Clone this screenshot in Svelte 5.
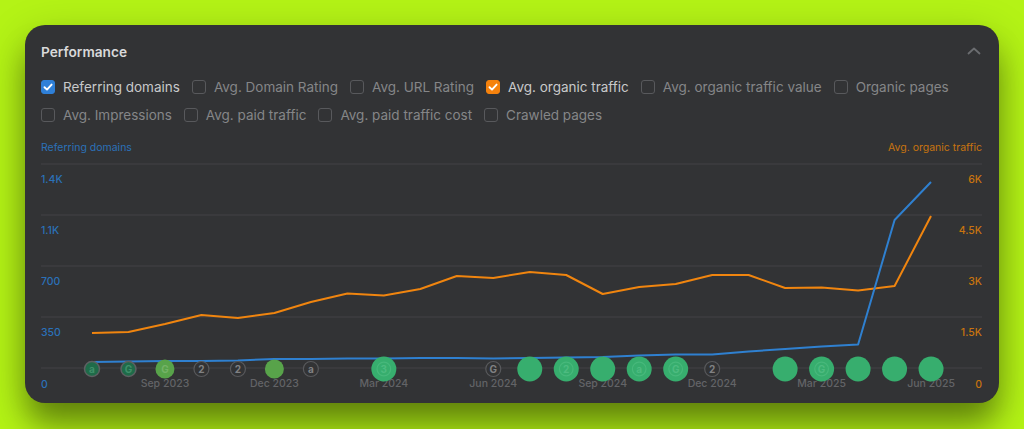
<script>
  const metrics = [
    { label: 'Referring domains', on: 'blue' },
    { label: 'Avg. Domain Rating' },
    { label: 'Avg. URL Rating' },
    { label: 'Avg. organic traffic', on: 'orange' },
    { label: 'Avg. organic traffic value' },
    { label: 'Organic pages' },
    { label: 'Avg. Impressions' },
    { label: 'Avg. paid traffic' },
    { label: 'Avg. paid traffic cost' },
    { label: 'Crawled pages' }
  ];

  const gridLines = [164, 215, 266, 317, 368];
  const leftTicks = [['1.4K', 183], ['1.1K', 234], ['700', 285], ['350', 336], ['0', 388]];
  const rightTicks = [['6K', 183], ['4.5K', 234], ['3K', 285], ['1.5K', 336], ['0', 388]];
  const months = ['Sep 2023', 'Dec 2023', 'Mar 2024', 'Jun 2024', 'Sep 2024', 'Dec 2024', 'Mar 2025', 'Jun 2025'];

  const step = 36.48;
  const xAt = (i) => 92 + i * step;

  const organic = [333, 332, 324, 315, 318, 313, 302, 293.5, 295.5, 289, 276, 278, 272, 275, 294, 287, 284, 275, 275, 288, 287.5, 290.5, 286, 216];
  const referring = [362, 361.5, 361, 361, 360.5, 359, 359, 358.5, 358.5, 358, 358, 358.5, 358, 357.5, 357, 355.5, 354.5, 354.5, 351.5, 349, 346.5, 344.5, 220, 182];

  const toPoints = (ys) => ys.map((y, i) => `${xAt(i).toFixed(1)},${y}`).join(' ');

  // kind: ring = outlined icon, dim = small dark green, mid = olive green, big = full green
  const markers = [
    { i: 0, kind: 'dim', glyph: 'a' },
    { i: 1, kind: 'dim', glyph: 'G' },
    { i: 2, kind: 'mid', glyph: 'G' },
    { i: 3, kind: 'ring', glyph: '2' },
    { i: 4, kind: 'ring', glyph: '2' },
    { i: 5, kind: 'mid', glyph: '' },
    { i: 6, kind: 'ring', glyph: 'a' },
    { i: 8, kind: 'big', glyph: '3' },
    { i: 11, kind: 'ring', glyph: 'G' },
    { i: 12, kind: 'big', glyph: '' },
    { i: 13, kind: 'big', glyph: '2' },
    { i: 14, kind: 'big', glyph: '' },
    { i: 15, kind: 'big', glyph: 'a' },
    { i: 16, kind: 'big', glyph: 'G' },
    { i: 17, kind: 'ring', glyph: '2' },
    { i: 19, kind: 'big', glyph: '' },
    { i: 20, kind: 'big', glyph: 'G' },
    { i: 21, kind: 'big', glyph: '' },
    { i: 22, kind: 'big', glyph: '' },
    { i: 23, kind: 'big', glyph: '' }
  ];
  const radius = { ring: 7.5, dim: 7.5, mid: 9.5, big: 12.5 };
</script>

<div class="page">
  <section class="card">
    <header>
      <h2>Performance</h2>
      <svg class="chevron" width="14" height="14" viewBox="0 0 14 14" fill="none">
        <path d="M1.5 9.5 7 4.5l5.5 5" stroke="#6b6d70" stroke-width="1.8" stroke-linecap="round" stroke-linejoin="round" />
      </svg>
    </header>

    <div class="metrics">
      {#each metrics as m}
        <div class="metric" class:active={m.on}>
          <span class="box {m.on ?? ''}">
            {#if m.on}
              <svg width="10" height="10" viewBox="0 0 10 10" fill="none">
                <path d="M1.5 5.2 4 7.6 8.6 2.6" stroke="#fff" stroke-width="1.9" stroke-linecap="round" stroke-linejoin="round" />
              </svg>
            {/if}
          </span>
          {m.label}
        </div>
      {/each}
    </div>

    <div class="legend">
      <span class="blue-text">Referring domains</span>
      <span class="orange-text">Avg. organic traffic</span>
    </div>

    <svg class="chart" width="941" height="250" viewBox="41 155 941 250">
      {#each gridLines as y}
        <line x1="41" x2="982" y1={y} y2={y} class="grid" />
      {/each}

      {#each leftTicks as [t, y]}
        <text x="41" {y} class="tick left">{t}</text>
      {/each}
      {#each rightTicks as [t, y]}
        <text x="982" {y} class="tick right">{t}</text>
      {/each}
      {#each months as m, n}
        <text x={xAt(2 + n * 3)} y="387" class="month">{m}</text>
      {/each}

      <polyline points={toPoints(organic)} class="line organic" />
      <polyline points={toPoints(referring)} class="line referring" />

      {#each markers as mk}
        <g class="marker {mk.kind}">
          <circle cx={xAt(mk.i)} cy="369" r={radius[mk.kind]} class="fill" />
          {#if mk.glyph}
            <circle cx={xAt(mk.i)} cy="369" r="6.8" class="inner" />
            <text x={xAt(mk.i)} y="372.6">{mk.glyph}</text>
          {/if}
        </g>
      {/each}
    </svg>
  </section>
</div>

<style>
  :global(body) {
    margin: 0;
    background: #b4f316;
  }

  .page {
    width: 1024px;
    height: 429px;
    box-sizing: border-box;
    padding: 25px;
    overflow: hidden;
    background: #b4f316;
    font-family: Inter, "Liberation Sans", sans-serif;
  }

  .card {
    height: 378px;
    box-sizing: border-box;
    padding: 15px 17px 0 16px;
    background: #323335;
    border-radius: 20px;
    box-shadow: 0 24px 30px -3px rgba(0, 0, 0, 0.35), 0 12px 44px rgba(0, 0, 0, 0.22);
  }

  header {
    display: flex;
    justify-content: space-between;
    align-items: center;
    height: 22px;
  }

  h2 {
    margin: 0;
    padding-top: 1px;
    font-size: 13.7px;
    font-weight: 600;
    color: #d9d9da;
  }

  .chevron {
    margin-right: 1px;
  }

  .metrics {
    display: flex;
    flex-wrap: wrap;
    gap: 0 12px;
    margin-top: 11px;
  }

  .metric {
    display: flex;
    align-items: center;
    gap: 8px;
    height: 28px;
    font-size: 13.5px;
    color: #858688;
  }

  .metric.active {
    color: #c8c9ca;
  }

  .box {
    width: 14px;
    height: 14px;
    box-sizing: border-box;
    display: flex;
    align-items: center;
    justify-content: center;
    border: 1px solid #58595c;
    border-radius: 3px;
  }

  .box.blue {
    background: #2f80d8;
    border-color: #2f80d8;
  }

  .box.orange {
    background: #f5820d;
    border-color: #f5820d;
  }

  .legend {
    display: flex;
    justify-content: space-between;
    margin-top: 12px;
    font-size: 10.5px;
    line-height: 14px;
  }

  .blue-text {
    color: #2b71b8;
  }

  .orange-text {
    color: #c8740f;
  }

  .chart {
    display: block;
    font-family: Inter, "Liberation Sans", sans-serif;
  }

  .grid {
    stroke: #424346;
    stroke-width: 1;
  }

  .tick {
    font-size: 10.5px;
    font-weight: 500;
  }

  .tick.left {
    fill: #2b71b8;
  }

  .tick.right {
    fill: #c8740f;
    text-anchor: end;
  }

  .month {
    font-size: 10.5px;
    font-weight: 500;
    fill: #636467;
    text-anchor: middle;
  }

  .line {
    fill: none;
    stroke-width: 2;
    stroke-linejoin: round;
  }

  .organic {
    stroke: #f0850f;
  }

  .referring {
    stroke: #2f80d0;
  }

  .marker text {
    font-size: 10px;
    font-weight: 700;
    text-anchor: middle;
  }

  .inner {
    fill: none;
    stroke-width: 1.2;
  }

  .ring .fill {
    fill: #323335;
    stroke: #58595c;
    stroke-width: 1.2;
  }

  .ring .inner {
    stroke: none;
  }

  .ring text {
    fill: #808183;
  }

  .dim .fill {
    fill: #1f6b49;
    stroke: #5d6062;
    stroke-width: 1.5;
  }

  .dim .inner {
    stroke: none;
  }

  .dim text {
    fill: #3f8f6a;
  }

  .mid .fill {
    fill: #58a34a;
  }

  .mid .inner {
    stroke: none;
  }

  .mid text {
    fill: #74b266;
  }

  .big .fill {
    fill: #37ae6e;
  }

  .big .inner {
    stroke: #47b87b;
  }

  .big text {
    fill: #4dbb80;
  }
</style>
